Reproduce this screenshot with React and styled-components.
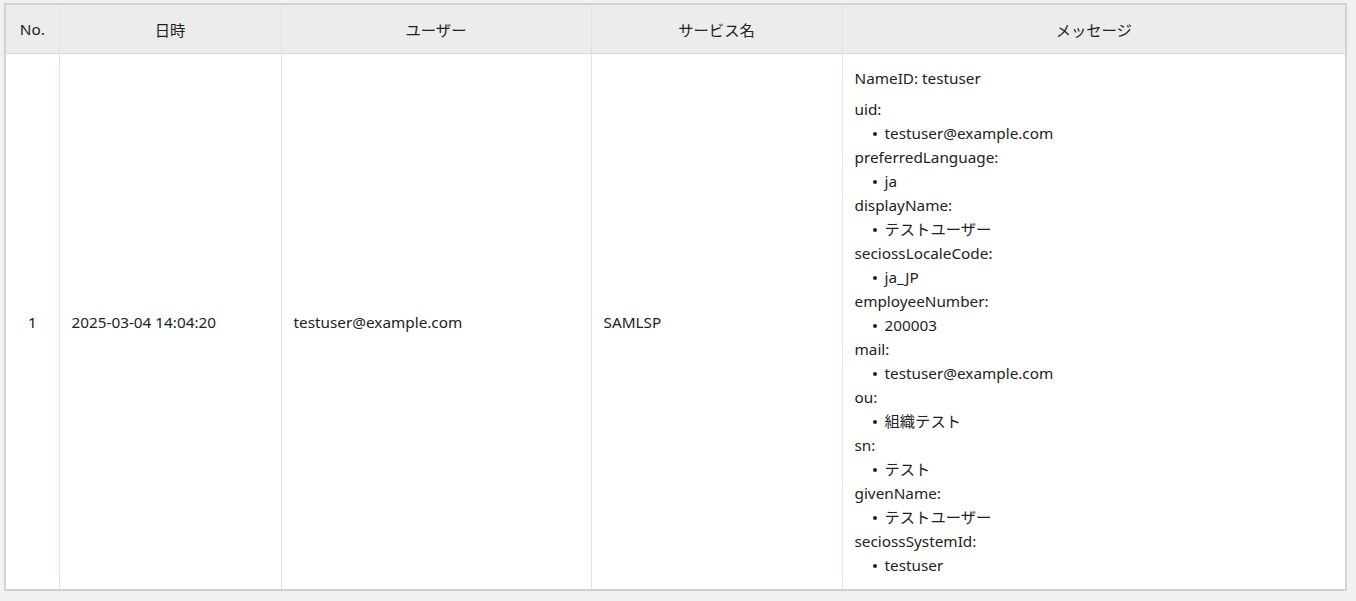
import React from "react";
import styled, { createGlobalStyle } from "styled-components";

const Global = createGlobalStyle`
  body { margin: 0; background: #f1f1f1; font-family: "Noto Sans", "Noto Sans CJK JP", sans-serif; color: #222; }
`;
const Wrap = styled.div`padding: 3px 9px 0 4px;`;
const Table = styled.table`
  width: 100%; border-collapse: collapse; background: #fff; table-layout: fixed;
  border: 2px solid #d2d2d2; font-size: 15.3px;
`;
const Th = styled.th`
  background: #ececec; font-weight: normal; height: 48px; padding: 0 12px;
  border-left: 1px solid #d6e6f0; border-bottom: 1px solid #dcdcdc; text-align: center;
`;
const Td = styled.td`
  border-left: 1px solid #d6e6f0; border-bottom: 2px solid #d2d2d2; padding: 12px 12px;
  text-align: ${p => p.center ? "center" : "left"}; vertical-align: middle;
`;
const Name = styled.div`margin-bottom: 7px; line-height: 24px;`;
const Key = styled.div`line-height: 24px;`;
const Items = styled.ul`margin: 0; padding-left: 18px; line-height: 24px; list-style: none;`;
const Item = styled.li`
  position: relative; padding-left: 12px;
  &::before { content: ""; position: absolute; left: 0; top: 11px; width: 4px; height: 4px; border-radius: 50%; background: #222; }
`;

const attrs = [
  ["uid", "testuser@example.com"], ["preferredLanguage", "ja"], ["displayName", "テストユーザー"],
  ["seciossLocaleCode", "ja_JP"], ["employeeNumber", "200003"], ["mail", "testuser@example.com"],
  ["ou", "組織テスト"], ["sn", "テスト"], ["givenName", "テストユーザー"], ["seciossSystemId", "testuser"],
];

export default function App() {
  return (
    <Wrap>
      <Global />
      <Table>
        <colgroup>
          <col style={{ width: 54 }} /><col style={{ width: 222 }} /><col style={{ width: 310 }} /><col style={{ width: 251 }} /><col />
        </colgroup>
        <thead>
          <tr>
            <Th>No.</Th><Th>日時</Th><Th>ユーザー</Th><Th>サービス名</Th><Th>メッセージ</Th>
          </tr>
        </thead>
        <tbody>
          <tr>
            <Td center>1</Td>
            <Td>2025-03-04 14:04:20</Td>
            <Td>testuser@example.com</Td>
            <Td>SAMLSP</Td>
            <Td>
              <Name>NameID: testuser</Name>
              {attrs.map(([k, v]) => (
                <React.Fragment key={k}>
                  <Key>{k}:</Key>
                  <Items><Item>{v}</Item></Items>
                </React.Fragment>
              ))}
            </Td>
          </tr>
        </tbody>
      </Table>
    </Wrap>
  );
}
